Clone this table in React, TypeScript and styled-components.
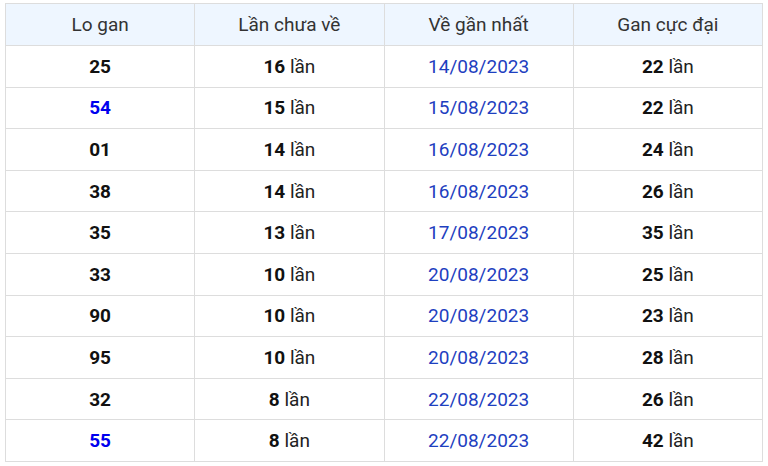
import React from 'react';
import styled, { createGlobalStyle } from 'styled-components';

interface Row {
  num: string;
  hot?: boolean;
  since: number;
  last: string;
  max: number;
}

const ROWS: Row[] = [
  { num: '25', since: 16, last: '14/08/2023', max: 22 },
  { num: '54', hot: true, since: 15, last: '15/08/2023', max: 22 },
  { num: '01', since: 14, last: '16/08/2023', max: 24 },
  { num: '38', since: 14, last: '16/08/2023', max: 26 },
  { num: '35', since: 13, last: '17/08/2023', max: 35 },
  { num: '33', since: 10, last: '20/08/2023', max: 25 },
  { num: '90', since: 10, last: '20/08/2023', max: 23 },
  { num: '95', since: 10, last: '20/08/2023', max: 28 },
  { num: '32', since: 8, last: '22/08/2023', max: 26 },
  { num: '55', hot: true, since: 8, last: '22/08/2023', max: 42 },
];

const GlobalStyle = createGlobalStyle`
  body {
    margin: 0;
    background: #fff;
    font-family: Roboto, "Liberation Sans", Arial, sans-serif;
  }
`;

const Wrapper = styled.div`
  padding: 3px 5px;
`;

const Table = styled.table`
  width: 758px;
  border-collapse: collapse;
  table-layout: fixed;
  font-size: 19px;
  color: #222;
`;

const HeadCell = styled.th`
  height: 41px;
  padding: 0;
  font-weight: normal;
  text-align: center;
  background: #eef6ff;
  border: 1px solid #dddddd;
  color: #333;
`;

const Cell = styled.td`
  height: 40.6px;
  padding: 0;
  text-align: center;
  border: 1px solid #dddddd;
`;

const Number = styled.b<{ $hot?: boolean }>`
  color: ${(p) => (p.$hot ? '#0000ee' : '#111')};
`;

const DateText = styled.span`
  color: #1e40c0;
`;

const Count = styled.b`
  color: #111;
`;

export default function App() {
  return (
    <>
      <GlobalStyle />
      <Wrapper>
        <Table>
          <thead>
            <tr>
              <HeadCell>Lo gan</HeadCell>
              <HeadCell>Lần chưa về</HeadCell>
              <HeadCell>Về gần nhất</HeadCell>
              <HeadCell>Gan cực đại</HeadCell>
            </tr>
          </thead>
          <tbody>
            {ROWS.map((r) => (
              <tr key={r.num}>
                <Cell>
                  <Number $hot={r.hot}>{r.num}</Number>
                </Cell>
                <Cell>
                  <Count>{r.since}</Count> lần
                </Cell>
                <Cell>
                  <DateText>{r.last}</DateText>
                </Cell>
                <Cell>
                  <Count>{r.max}</Count> lần
                </Cell>
              </tr>
            ))}
          </tbody>
        </Table>
      </Wrapper>
    </>
  );
}
